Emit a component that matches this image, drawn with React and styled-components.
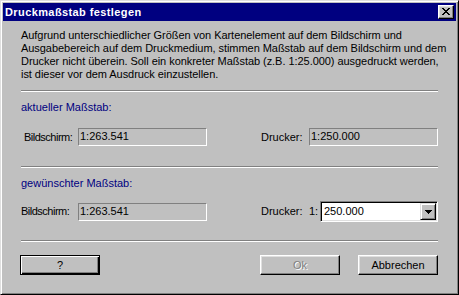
import React from "react";
import styled, { createGlobalStyle } from "styled-components";

const Global = createGlobalStyle`
  html, body { margin: 0; padding: 0; background: #c0c0c0; }
  body { font-family: "Liberation Sans", Arial, sans-serif; font-size: 11px; color: #000; }
  * { box-sizing: border-box; }
`;

const Window = styled.div`
  width: 459px;
  height: 295px;
  background: #c0c0c0;
  border: 1px solid;
  border-color: #dfdfdf #000 #000 #dfdfdf;
  box-shadow: inset 1px 1px #fff, inset -1px -1px #808080;
  padding: 2px;
  display: flex;
  flex-direction: column;
`;

const TitleBar = styled.div`
  height: 18px;
  background: #000080;
  display: flex;
  align-items: center;
  justify-content: space-between;
  padding: 0 2px 0 2px;
`;

const TitleText = styled.div`
  color: #fff;
  font-weight: bold;
  font-size: 11px;
  line-height: 13px;
  letter-spacing: 0.4px;
  white-space: nowrap;
`;

const CloseButton = styled.div`
  width: 16px;
  height: 14px;
  background: #c0c0c0;
  border: 1px solid;
  border-color: #fff #000 #000 #fff;
  box-shadow: inset -1px -1px #808080, inset 1px 1px #dfdfdf;
  display: flex;
  align-items: center;
  justify-content: center;
  padding-bottom: 1px;
  padding-right: 1px;
`;

const Client = styled.div`
  flex: 1;
  display: flex;
  flex-direction: column;
  padding: 0 18px;
`;

const Paragraph = styled.div`
  margin-top: 8px;
  line-height: 13px;
  white-space: nowrap;
  letter-spacing: -0.05px;
`;

const Separator = styled.div`
  height: 2px;
  border-top: 1px solid #808080;
  border-bottom: 1px solid #fff;
  margin-top: ${(p) => p.$mt}px;
`;

const GroupTitle = styled.div`
  color: #000080;
  line-height: 13px;
  margin-top: 9px;
`;

const Row = styled.div`
  display: grid;
  grid-template-columns: 57px 129px 54px 48px 129px;
  align-items: center;
  height: ${(p) => p.$h}px;
  margin-top: ${(p) => p.$mt}px;
`;

const Label = styled.span`
  white-space: nowrap;
  line-height: 13px;
  padding-left: ${(p) => p.$indent || 0}px;
  letter-spacing: ${(p) => p.$ls || 0}px;
`;

const ReadOnlyField = styled.div`
  height: 18px;
  border: 1px solid;
  border-color: #808080 #fff #fff #808080;
  background: #c0c0c0;
  padding: 0 1px;
  line-height: 15px;
  white-space: nowrap;
`;

const ComboCell = styled.div`
  display: flex;
  align-items: center;
`;

const Prefix = styled.span`
  width: 11px;
  line-height: 13px;
`;

const Combo = styled.div`
  width: 118px;
  height: 21px;
  border: 1px solid;
  border-color: #808080 #fff #fff #808080;
  box-shadow: inset 1px 1px #000, inset -1px -1px #dfdfdf;
  background: #fff;
  padding: 2px 2px 2px 3px;
  display: flex;
  align-items: center;
  justify-content: space-between;
`;

const ComboValue = styled.span`
  line-height: 15px;
  margin-top: -1px;
`;

const DropButton = styled.div`
  width: 16px;
  height: 17px;
  margin-right: -1px;
  background: #c0c0c0;
  border: 1px solid;
  border-color: #dfdfdf #000 #000 #dfdfdf;
  box-shadow: inset 1px 1px #fff, inset -1px -1px #808080;
  display: flex;
  align-items: center;
  justify-content: center;
`;

const ButtonRow = styled.div`
  display: flex;
  margin-top: 13px;
  margin-left: -1px;
  gap: 18px;
`;

const Spacer = styled.div`
  flex: 1;
`;

const Button = styled.div`
  width: 80px;
  height: 20px;
  background: #c0c0c0;
  border: 1px solid;
  border-color: ${(p) => (p.$default ? "#000" : "#fff #000 #000 #fff")};
  box-shadow: ${(p) =>
    p.$default
      ? "inset 1px 1px #fff, inset -1px -1px #000, inset -2px -2px #808080"
      : "inset -1px -1px #808080, inset 1px 1px #dfdfdf"};
  display: flex;
  align-items: center;
  justify-content: center;
  line-height: 13px;
  color: ${(p) => (p.$disabled ? "#808080" : "#000")};
  text-shadow: ${(p) => (p.$disabled ? "1px 1px 0 #fff" : "none")};
`;

const CloseGlyph = () => {
  const rows = [
    "XX....XX",
    ".XX..XX.",
    "..XXXX..",
    "...XX...",
    "..XXXX..",
    ".XX..XX.",
    "XX....XX",
  ];
  const rects = [];
  rows.forEach((r, y) =>
    r.split("").forEach((c, x) => {
      if (c === "X") rects.push(<rect key={`${x}-${y}`} x={x} y={y} width="1" height="1" />);
    })
  );
  return (
    <svg width="8" height="7" viewBox="0 0 8 7" shapeRendering="crispEdges" fill="#000">
      {rects}
    </svg>
  );
};

const DownArrow = () => (
  <svg width="7" height="4" viewBox="0 0 7 4" shapeRendering="crispEdges" fill="#000">
    <rect x="0" y="0" width="7" height="1" />
    <rect x="1" y="1" width="5" height="1" />
    <rect x="2" y="2" width="3" height="1" />
    <rect x="3" y="3" width="1" height="1" />
  </svg>
);

export default function App() {
  return (
    <>
      <Global />
      <Window>
        <TitleBar>
          <TitleText>Druckmaßstab festlegen</TitleText>
          <CloseButton>
            <CloseGlyph />
          </CloseButton>
        </TitleBar>
        <Client>
          <Paragraph>
            Aufgrund unterschiedlicher Größen von Kartenelement auf dem Bildschirm und
            <br />
            Ausgabebereich auf dem Druckmedium, stimmen Maßstab auf dem Bildschirm und dem
            <br />
            Drucker nicht überein. Soll ein konkreter Maßstab (z.B. 1:25.000) ausgedruckt werden,
            <br />
            ist dieser vor dem Ausdruck einzustellen.
          </Paragraph>
          <Separator $mt={9} />
          <GroupTitle>aktueller Maßstab:</GroupTitle>
          <Row $h={18} $mt={14}>
            <Label $indent={3} $ls={-0.5}>Bildschirm:</Label>
            <ReadOnlyField>1:263.541</ReadOnlyField>
            <span />
            <Label>Drucker:</Label>
            <ReadOnlyField>1:250.000</ReadOnlyField>
          </Row>
          <Separator $mt={20} />
          <GroupTitle>gewünschter Maßstab:</GroupTitle>
          <Row $h={21} $mt={11}>
            <Label $ls={-0.5}>Bildschirm:</Label>
            <ReadOnlyField>1:263.541</ReadOnlyField>
            <span />
            <Label>Drucker:</Label>
            <ComboCell>
              <Prefix>1:</Prefix>
              <Combo>
                <ComboValue>250.000</ComboValue>
                <DropButton>
                  <DownArrow />
                </DropButton>
              </Combo>
            </ComboCell>
          </Row>
          <Separator $mt={18} />
          <ButtonRow>
            <Button $default>?</Button>
            <Spacer />
            <Button $disabled>Ok</Button>
            <Button>Abbrechen</Button>
          </ButtonRow>
        </Client>
      </Window>
    </>
  );
}
